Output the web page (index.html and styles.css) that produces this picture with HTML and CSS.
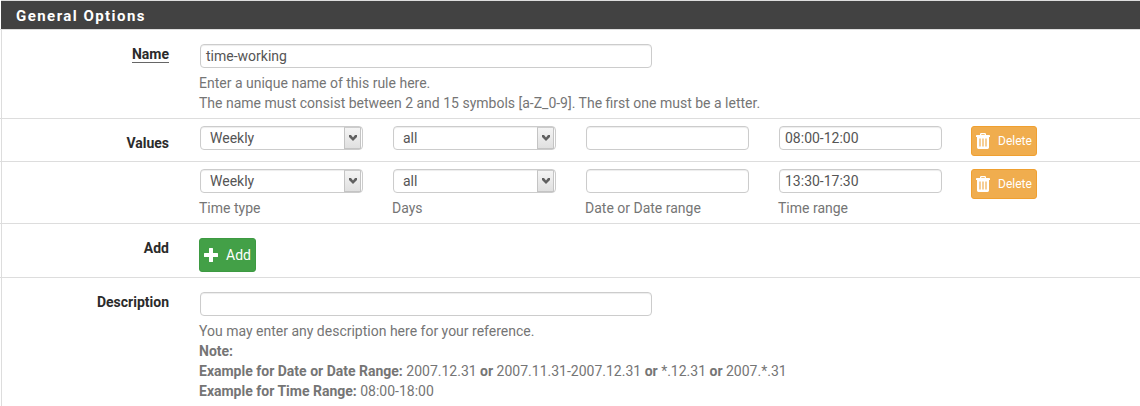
FILE: index.html
```html
<!DOCTYPE html>
<html lang="en">
<head>
<meta charset="utf-8">
<title>General Options</title>
<link rel="stylesheet" href="styles.css">
</head>
<body>
<svg class="sprite" aria-hidden="true">
  <symbol id="chevron" viewBox="0 0 8 6"><path d="M0 0H2L4 2.4L6 0H8V2L4 6L0 2Z"/></symbol>
  <symbol id="trash" viewBox="0 0 14 16"><path fill-rule="evenodd" d="M4 2V1.2Q4 0 5.2 0H8.8Q10 0 10 1.2V2H13.2Q14 2 14 2.8V4H0V2.8Q0 2 .8 2ZM5.3 2H8.7V1.2H5.3ZM1 4H13V14.6Q13 16 11.6 16H2.4Q1 16 1 14.6ZM3.4 5.5V13.5H4.6V5.5ZM6.4 5.5V13.5H7.6V5.5ZM9.4 5.5V13.5H10.6V5.5Z"/></symbol>
  <symbol id="plus" viewBox="0 0 14 14"><path d="M5 .6Q5 0 5.6 0H8.4Q9 0 9 .6V5H13.4Q14 5 14 5.6V8.4Q14 9 13.4 9H9V13.4Q9 14 8.4 14H5.6Q5 14 5 13.4V9H.6Q0 9 0 8.4V5.6Q0 5 .6 5H5Z"/></symbol>
</svg>
<main class="panel">
  <h2 class="panel-title">General Options</h2>
  <section class="row row-name">
    <div class="label"><span class="required">Name</span></div>
    <div class="content">
      <div class="field">time-working</div>
      <p class="help">Enter a unique name of this rule here.<br>The name must consist between 2 and 15 symbols [a-Z_0-9]. The first one must be a letter.</p>
    </div>
  </section>
  <section class="row row-values">
    <div class="label">Values</div>
    <div class="content columns">
      <div class="field select">Weekly<span class="arrow"><svg><use href="#chevron"/></svg></span></div>
      <div class="field select">all<span class="arrow"><svg><use href="#chevron"/></svg></span></div>
      <div class="field"></div>
      <div class="field">08:00-12:00</div>
      <button class="btn delete"><svg><use href="#trash"/></svg><span>Delete</span></button>
    </div>
  </section>
  <section class="row row-values row-last">
    <div class="label"></div>
    <div class="content columns">
      <div><div class="field select">Weekly<span class="arrow"><svg><use href="#chevron"/></svg></span></div><p class="help">Time type</p></div>
      <div><div class="field select">all<span class="arrow"><svg><use href="#chevron"/></svg></span></div><p class="help">Days</p></div>
      <div><div class="field"></div><p class="help">Date or Date range</p></div>
      <div><div class="field">13:30-17:30</div><p class="help">Time range</p></div>
      <button class="btn delete"><svg><use href="#trash"/></svg><span>Delete</span></button>
    </div>
  </section>
  <section class="row row-add">
    <div class="label">Add</div>
    <div class="content"><button class="btn add"><svg><use href="#plus"/></svg><span>Add</span></button></div>
  </section>
  <section class="row row-description">
    <div class="label">Description</div>
    <div class="content">
      <div class="field"></div>
      <p class="help">You may enter any description here for your reference.<br><b>Note:</b><br><b>Example for Date or Date Range:</b> 2007.12.31 <b>or</b> 2007.11.31-2007.12.31 <b>or</b> *.12.31 <b>or</b> 2007.*.31<br><b>Example for Time Range:</b> 08:00-18:00</p>
    </div>
  </section>
</main>
</body>
</html>
```
FILE: styles.css
```css
* { box-sizing: border-box; }
body {
  margin: 0;
  overflow: hidden;
  background: #fff;
  color: #757575;
  font: 14px/20px Roboto, sans-serif;
}
.sprite { display: none; }
.panel {
  height: 406px;
  margin-left: 1px;
  border-top: 1px solid #ddd;
  border-left: 1px solid #ddd;
}
.panel-title {
  height: 28px;
  margin: 0 0 0 -1px;
  padding-left: 15px;
  background: #424242;
  color: #fff;
  font-size: 15px;
  font-weight: 700;
  line-height: 30px;
  letter-spacing: 1.45px;
}
.row {
  display: flex;
  margin-left: -2px;
  padding-left: 2px;
  border-bottom: 1px solid #ddd;
}
.row-name { height: 90px; padding-top: 14px; border-top: 1px solid #ddd; }
.row-values { height: 43px; padding-top: 7px; }
.row-last { height: 62px; }
.row-add { height: 54px; padding-top: 14px; }
.row-description { height: 128px; padding-top: 14px; border-bottom: 0; }
.label {
  flex: none;
  width: 167px;
  color: #2b2b2b;
  font-weight: 700;
  text-align: right;
}
.row-values .label { padding-top: 7px; }
.required {
  display: inline-block;
  height: 19px;
  border-bottom: 1px solid #666;
}
.content { margin-left: 31px; }
.field {
  display: flex;
  align-items: center;
  width: 452px;
  height: 24px;
  padding-left: 5px;
  border: 1px solid #ccc;
  border-radius: 4px;
  box-shadow: inset 0 1px 1px rgba(0, 0, 0, .075);
  color: #555;
}
.help { margin: 5px 0 0 -1px; }
.columns {
  display: grid;
  grid-template-columns: repeat(4, 163px) 66px;
  column-gap: 30px;
  align-items: start;
}
.columns .field { width: 163px; }
.columns .select { justify-content: space-between; padding: 0 1px 0 9px; }
.arrow {
  display: grid;
  place-items: center;
  width: 17px;
  height: 22px;
  border: 1px solid #c4c4c4;
  border-top-color: #ccc;
  background: linear-gradient(#f4f4f4, #e0e0e0);
}
.arrow svg { width: 8px; height: 6px; fill: #606060; }
.btn {
  display: flex;
  align-items: center;
  border: 1px solid;
  border-radius: 3px;
  color: #fff;
  font-family: inherit;
}
.btn svg { flex: none; fill: currentColor; }
.delete {
  width: 66px;
  height: 30px;
  margin-left: -1px;
  padding: 0 0 0 4px;
  gap: 8px;
  border-color: #f0a030;
  background: #f0ad4e;
  font-size: 12px;
}
.delete svg { width: 14px; height: 16px; }
.add {
  width: 57px;
  height: 34px;
  margin-left: -1px;
  padding: 0 0 0 4px;
  gap: 8px;
  border-color: #3d9a42;
  background: #43a047;
  font-size: 14px;
}
.add svg { width: 14px; height: 14px; }
```
